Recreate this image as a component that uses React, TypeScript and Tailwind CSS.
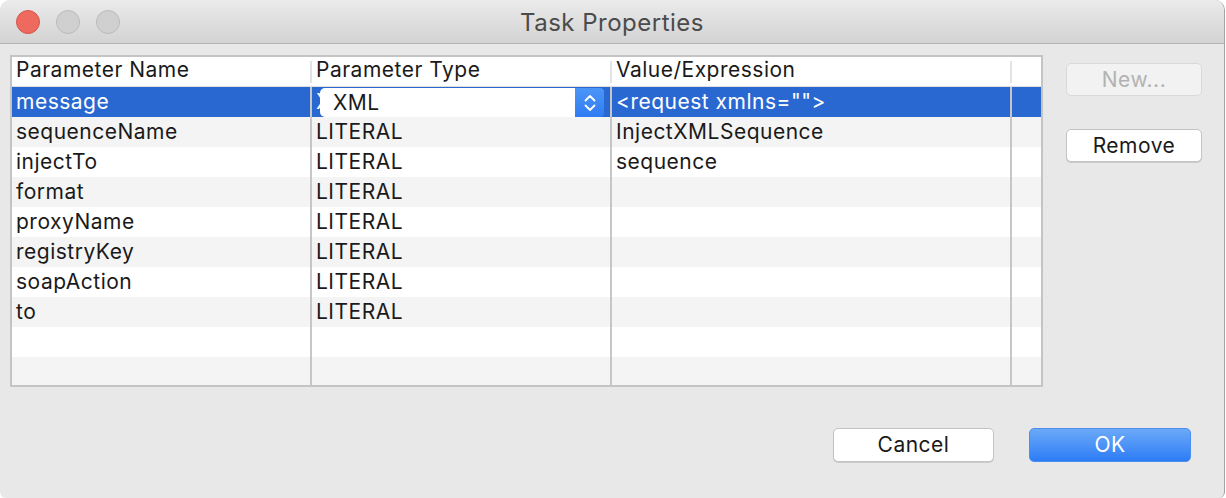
import React from "react"

const rows = [
  { name: "message", type: "XML", value: '<request xmlns="">' },
  { name: "sequenceName", type: "LITERAL", value: "InjectXMLSequence" },
  { name: "injectTo", type: "LITERAL", value: "sequence" },
  { name: "format", type: "LITERAL", value: "" },
  { name: "proxyName", type: "LITERAL", value: "" },
  { name: "registryKey", type: "LITERAL", value: "" },
  { name: "soapAction", type: "LITERAL", value: "" },
  { name: "to", type: "LITERAL", value: "" },
  { name: "", type: "", value: "" },
  { name: "", type: "", value: "" },
]

function Chevrons() {
  return (
    <svg width="14" height="20" viewBox="0 0 14 20" fill="none" stroke="white" strokeWidth="1.8" strokeLinecap="round" strokeLinejoin="round">
      <path d="M2.5 7.5 L7 3 L11.5 7.5" />
      <path d="M2.5 12.5 L7 17 L11.5 12.5" />
    </svg>
  )
}

function HeaderSep() {
  return <div className="w-[2px] h-[22px] self-center bg-[#e2e2e2]" />
}

export default function App() {
  return (
    <div className="w-[1226px] h-[498px] bg-white font-['Inter',sans-serif] text-[#1a1a1a] tracking-[0.5px]">
      <div className="w-[1225px] h-[498px] flex flex-col bg-[#e8e8e8] rounded-t-[10px] rounded-b-[6px] border-r border-[#a3a3a3] overflow-hidden">
        {/* Title bar */}
        <div className="h-[44px] shrink-0 grid grid-cols-[1fr_auto_1fr] items-center bg-gradient-to-b from-[#ebebeb] to-[#d3d3d3] border-b border-[#b3b3b3]">
          <div className="flex items-center gap-[16px] pl-[16px]">
            <span className="w-[24px] h-[24px] rounded-full bg-[#ee6a5f] border border-[#d6554b]" />
            <span className="w-[24px] h-[24px] rounded-full bg-[#d0d0d0] border border-[#bababa]" />
            <span className="w-[24px] h-[24px] rounded-full bg-[#d0d0d0] border border-[#bababa]" />
          </div>
          <div className="text-[24px] text-[#4b4b4b] pt-[2px]">Task Properties</div>
          <div />
        </div>

        {/* Content */}
        <div className="flex pl-[10px] pt-[11px]">
          <div className="w-[1033px] h-[332px] border-2 border-[#c4c4c4] bg-white overflow-hidden">
            {/* Header */}
            <div className="flex h-[30px] border-b border-[#dedede] text-[21px]">
              <div className="w-[298px] pl-[4px] leading-[26px]">Parameter Name</div>
              <HeaderSep />
              <div className="w-[298px] pl-[4px] leading-[26px]">Parameter Type</div>
              <HeaderSep />
              <div className="w-[398px] pl-[4px] leading-[26px]">Value/Expression</div>
              <HeaderSep />
              <div className="flex-1" />
            </div>
            {rows.map((r, i) => {
              const selected = i === 0
              const bg = selected ? "bg-[#2a68d1] text-white" : i % 2 === 1 ? "bg-[#f4f4f4]" : "bg-white"
              return (
                <div key={i} className={`flex h-[30px] text-[21px] leading-[30px] ${bg}`}>
                  <div className="w-[300px] pl-[4px] border-r-2 border-[#c6c6c6]">{r.name}</div>
                  <div className="w-[300px] pl-[4px] border-r-2 border-[#c6c6c6] relative overflow-hidden">
                    {selected ? <span className="inline-block w-[6px] overflow-hidden align-top">X</span> : r.type}
                    {selected && (
                      <div className="absolute left-[8px] top-px bottom-0 right-[6px] flex rounded-l-[5px] rounded-r-[4px] overflow-hidden">
                        <div className="flex-1 bg-white text-[#1a1a1a] pl-[13px] leading-[29px]">{r.type}</div>
                        <div className="w-[29px] bg-gradient-to-b from-[#4c95f7] to-[#2f7cf3] flex items-center justify-center">
                          <Chevrons />
                        </div>
                      </div>
                    )}
                  </div>
                  <div className="w-[400px] pl-[4px] border-r-2 border-[#c6c6c6] whitespace-pre">{r.value}</div>
                  <div className="flex-1" />
                </div>
              )
            })}
          </div>

          {/* Side buttons */}
          <div className="ml-[23px] pt-[8px] flex flex-col gap-[33px]">
            <div className="w-[136px] h-[33px] rounded-[5px] bg-[#f2f2f2] border border-[#d9d9d9] flex items-center justify-center text-[21px] text-[#b3b3b3]">
              New...
            </div>
            <div className="w-[136px] h-[33px] rounded-[5px] bg-white border border-[#c3c3c3] shadow-[0_1px_0_rgba(0,0,0,0.12)] flex items-center justify-center text-[21px]">
              Remove
            </div>
          </div>
        </div>

        {/* Footer */}
        <div className="flex justify-end gap-[35px] pr-[33px] mt-[41px]">
          <div className="w-[161px] h-[34px] rounded-[5px] bg-white border border-[#c3c3c3] shadow-[0_1px_0_rgba(0,0,0,0.12)] flex items-center justify-center text-[21px]">
            Cancel
          </div>
          <div className="w-[162px] h-[34px] rounded-[5px] bg-gradient-to-b from-[#6ba9f8] to-[#2c7cf6] border border-[#4a8ef0] flex items-center justify-center text-[21px] text-white">
            OK
          </div>
        </div>
      </div>
    </div>
  )
}
